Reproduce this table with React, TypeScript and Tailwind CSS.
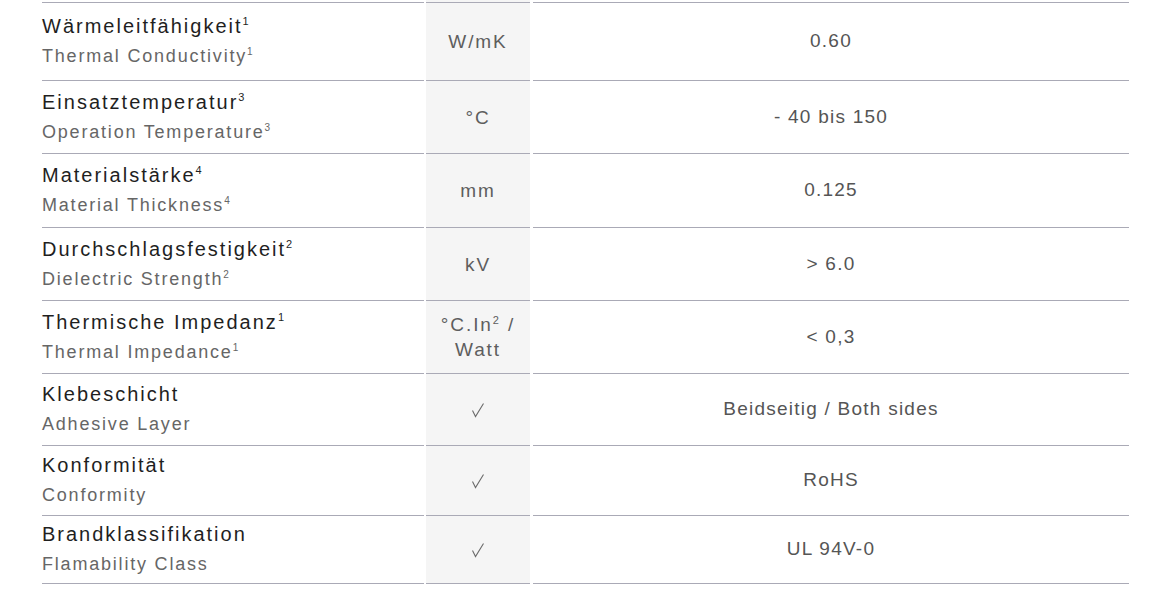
const rows: { de: string; en: string; sup?: string; unit: React.ReactNode; value: string; h: string }[] = [
  { de: "Wärmeleitfähigkeit", en: "Thermal Conductivity", sup: "1", unit: "W/mK", value: "0.60", h: "h-[78px]" },
  { de: "Einsatztemperatur", en: "Operation Temperature", sup: "3", unit: "°C", value: "- 40 bis 150", h: "h-[73px]" },
  { de: "Materialstärke", en: "Material Thickness", sup: "4", unit: "mm", value: "0.125", h: "h-[74px]" },
  { de: "Durchschlagsfestigkeit", en: "Dielectric Strength", sup: "2", unit: "kV", value: "> 6.0", h: "h-[73px]" },
  {
    de: "Thermische Impedanz",
    en: "Thermal Impedance",
    sup: "1",
    unit: (
      <span>
        °C.In<sup className="text-[11px] -top-[0.6em]">2</sup> /<br />Watt
      </span>
    ),
    value: "< 0,3",
    h: "h-[73px]",
  },
  { de: "Klebeschicht", en: "Adhesive Layer", unit: "check", value: "Beidseitig / Both sides", h: "h-[72px]" },
  { de: "Konformität", en: "Conformity", unit: "check", value: "RoHS", h: "h-[70px]" },
  { de: "Brandklassifikation", en: "Flamability Class", unit: "check", value: "UL 94V-0", h: "h-[68px]" },
];

function Check() {
  return (
    <svg width="14" height="16" viewBox="0 0 14 16" fill="none" aria-label="✓">
      <path d="M1.5 8.5 L4.5 14.5 L12.5 1.5" stroke="#6b6b6b" strokeWidth="1.1" strokeLinejoin="miter" />
    </svg>
  );
}

export default function App() {
  return (
    <div className="w-[1163px] h-[595px] bg-white pl-[42px] font-['Liberation_Sans',Arial,sans-serif]">
      <div className="w-[1087px] flex flex-col">
        {/* cut-off row above */}
        <div className="flex h-[3px] gap-[2px]">
          <div className="w-[382px] border-b border-[#aaaab6]" />
          <div className="w-[104px] bg-[#f5f5f5] border-b border-[#aaaab6]" />
          <div className="flex-1 ml-[1px] border-b border-[#aaaab6]" />
        </div>
        {rows.map((r) => (
          <div key={r.de} className={`flex gap-[2px] ${r.h}`}>
            <div className="w-[382px] border-b border-[#aaaab6] flex flex-col justify-center">
              <div className="text-[20px] leading-[29px] tracking-[0.1em] text-[#1f1f1f]">
                {r.de}
                {r.sup && <sup className="text-[11px] tracking-normal -top-[0.7em]">{r.sup}</sup>}
              </div>
              <div className="text-[18px] leading-[30px] tracking-[0.1em] text-[#666666]">
                {r.en}
                {r.sup && <sup className="text-[10px] tracking-normal -top-[0.7em]">{r.sup}</sup>}
              </div>
            </div>
            <div className="w-[104px] bg-[#f5f5f5] border-b border-[#aaaab6] flex items-center justify-center text-center text-[19px] leading-[25px] tracking-[0.1em] text-[#5e5e5e]">
              {r.unit === "check" ? <Check /> : r.unit}
            </div>
            <div className="flex-1 ml-[1px] border-b border-[#aaaab6] flex items-center justify-center text-[19px] tracking-[0.065em] text-[#555555]">
              {r.value}
            </div>
          </div>
        ))}
      </div>
    </div>
  );
}
